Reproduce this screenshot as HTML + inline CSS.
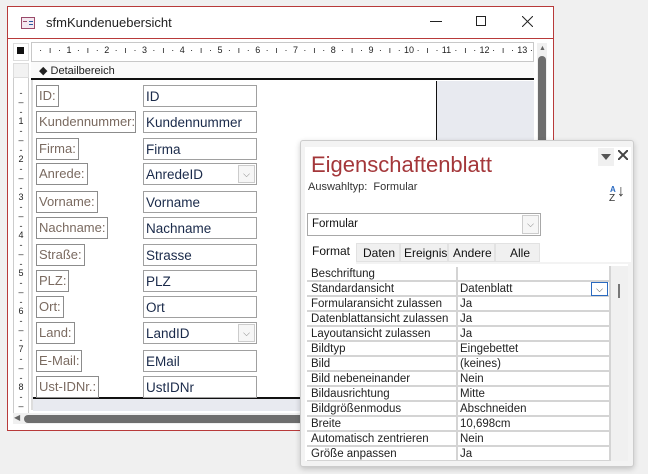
<!DOCTYPE html>
<html><head><meta charset="utf-8"><style>
*{box-sizing:border-box;margin:0;padding:0}
body{width:648px;height:474px;background:#f0f0f0;position:relative;overflow:hidden;font-family:"Liberation Sans",sans-serif}
.a{position:absolute}
.lb{position:absolute;left:36px;height:22px;border:1px solid #8c8c8c;font-size:13px;color:#7a6a60;padding:2px 2px 0 2px;white-space:nowrap;background:#fff}
.tb{position:absolute;left:143px;width:114px;height:22px;border:1px solid #a0a0a0;font-size:13.5px;color:#1a2a4a;padding:3px 0 0 2px;background:#fff}
.dd{position:absolute;right:1px;top:1px;width:17px;height:18px;border:1px solid #ccc;background:#f6f6f6;color:#777;font-size:9px;text-align:center;line-height:16px}
.row{position:absolute;left:307px;width:302px;height:15px;font-size:11.5px;color:#222;border-bottom:2px solid #d4d4d4}
.row span{position:absolute;top:1px}
.row .k{left:4px}.row .v{left:153px}
.row:before{content:"";position:absolute;left:149px;top:0;width:2px;height:15px;background:#d4d4d4}
.hr{position:absolute;top:45px;left:26.5px;white-space:nowrap;font-size:9px;color:#222;height:14px;overflow:hidden;width:506px}
.hr i{display:inline-block;width:9.44px;text-align:center;font-style:normal}
.vr{position:absolute;left:13px;top:79px;width:16px;font-size:9px;color:#222;height:333px;overflow:hidden}
.vr i{display:block;height:9.5px;line-height:9.5px;text-align:center;font-style:normal;margin-top:-4.75px;margin-bottom:4.75px}
</style></head><body>
<div class="a" style="left:7px;top:6px;width:547px;height:425px;background:#fff;border:1px solid #b83a3a"></div>
<div class="a" style="left:8px;top:38px;width:545px;height:1px;background:#b83a3a"></div>
<div class="a" style="left:21px;top:17px;width:14px;height:12px;border:1px solid #9a4a6a;background:#f4e8f0"></div>
<div class="a" style="left:23px;top:21px;width:4px;height:1px;background:#9a4a6a"></div>
<div class="a" style="left:29px;top:21px;width:4px;height:1px;background:#2a5aa0"></div>
<div class="a" style="left:29px;top:24px;width:4px;height:1px;background:#2a5aa0"></div>
<div class="a" style="left:46px;top:15px;font-size:13px;color:#222">sfmKundenuebersicht</div>
<div class="a" style="left:430px;top:21px;width:12px;height:1px;background:#222"></div>
<div class="a" style="left:476px;top:16px;width:10px;height:10px;border:1px solid #222"></div>
<svg class="a" style="left:522px;top:16px" width="11" height="11"><path d="M0 0L11 11M11 0L0 11" stroke="#222" stroke-width="1"/></svg>
<!-- ruler -->
<div class="a" style="left:13px;top:43px;width:16px;height:18px;background:#fff;border:1px solid #ddd"></div>
<div class="a" style="left:17px;top:47px;width:7px;height:7px;background:#111"></div>
<div class="a" style="left:31px;top:42px;width:503px;height:20px;border:1px solid #c8c8c8;background:#fff"></div>
<div class="hr"><i></i><i>·</i><i>ı</i><i>·</i><i>1</i><i>·</i><i>ı</i><i>·</i><i>2</i><i>·</i><i>ı</i><i>·</i><i>3</i><i>·</i><i>ı</i><i>·</i><i>4</i><i>·</i><i>ı</i><i>·</i><i>5</i><i>·</i><i>ı</i><i>·</i><i>6</i><i>·</i><i>ı</i><i>·</i><i>7</i><i>·</i><i>ı</i><i>·</i><i>8</i><i>·</i><i>ı</i><i>·</i><i>9</i><i>·</i><i>ı</i><i>·</i><i>10</i><i>·</i><i>ı</i><i>·</i><i>11</i><i>·</i><i>ı</i><i>·</i><i>12</i><i>·</i><i>ı</i><i>·</i><i>13</i><i>·</i></div>
<div class="a" style="left:13px;top:63px;width:16px;height:350px;background:#fff;border-right:1px solid #ccc;border-left:1px solid #ccc"></div>
<div class="a" style="left:13px;top:63px;width:16px;height:15px;background:#f2f2f2;border:1px solid #ddd"></div>
<div class="vr" style="top:84px;height:328px"><i></i><i>-</i><i>–</i><i>-</i><i>1</i><i>-</i><i>–</i><i>-</i><i>2</i><i>-</i><i>–</i><i>-</i><i>3</i><i>-</i><i>–</i><i>-</i><i>4</i><i>-</i><i>–</i><i>-</i><i>5</i><i>-</i><i>–</i><i>-</i><i>6</i><i>-</i><i>–</i><i>-</i><i>7</i><i>-</i><i>–</i><i>-</i><i>8</i><i>-</i><i>–</i><i>-</i></div>
<!-- detail header -->
<div class="a" style="left:31px;top:62px;width:503px;height:18px;background:#fafafa;border-bottom:2px solid #111"></div>
<div class="a" style="left:39px;top:64px;font-size:11px;color:#222">◆ Detailbereich</div>
<div class="a" style="left:31px;top:80px;width:2px;height:330px;background:#ddd"></div>
<div class="a" style="left:436px;top:81px;width:98px;height:318px;background:#e8eaf0;border-left:1px solid #111"></div>
<div class="a" style="left:33px;top:397px;width:501px;height:2px;background:#111"></div>
<div class="a" style="left:33px;top:399px;width:501px;height:12px;background:#e8eaf0"></div>
<!-- scrollbars -->
<div class="a" style="left:537px;top:43px;width:10px;height:370px;background:#f0f0f0"></div>
<div class="a" style="left:539px;top:45px;font-size:7px;color:#666">▲</div>
<div class="a" style="left:538px;top:56px;width:8px;height:360px;background:#6e6e6e;border-radius:4px"></div>
<div class="a" style="left:13px;top:413px;width:520px;height:11px;background:#f0f0f0"></div>
<div class="a" style="left:14px;top:413px;font-size:8px;color:#666">◀</div>
<div class="a" style="left:24px;top:415px;width:280px;height:8px;background:#6e6e6e;border-radius:4px"></div>
<!-- form -->
<div class="lb" style="top:85px">ID:</div><div class="tb" style="top:85px">ID</div>
<div class="lb" style="top:111px;padding-right:0">Kundennummer:</div><div class="tb" style="top:111px">Kundennummer</div>
<div class="lb" style="top:138px">Firma:</div><div class="tb" style="top:138px">Firma</div>
<div class="lb" style="top:163px">Anrede:</div><div class="tb" style="top:163px">AnredeID<div class="dd">⌵</div></div>
<div class="lb" style="top:191px">Vorname:</div><div class="tb" style="top:191px">Vorname</div>
<div class="lb" style="top:217px">Nachname:</div><div class="tb" style="top:217px">Nachname</div>
<div class="lb" style="top:244px">Straße:</div><div class="tb" style="top:244px">Strasse</div>
<div class="lb" style="top:270px">PLZ:</div><div class="tb" style="top:270px">PLZ</div>
<div class="lb" style="top:296px">Ort:</div><div class="tb" style="top:296px">Ort</div>
<div class="lb" style="top:322px">Land:</div><div class="tb" style="top:322px">LandID<div class="dd">⌵</div></div>
<div class="lb" style="top:350px">E-Mail:</div><div class="tb" style="top:350px">EMail</div>
<div class="lb" style="top:376px">Ust-IDNr.:</div><div class="tb" style="top:376px">UstIDNr</div>
<!-- property sheet -->
<div class="a" style="left:300px;top:140px;width:334px;height:327px;background:#f3f3f3;border:1px solid #ccc;border-radius:3px;box-shadow:0 2px 6px rgba(0,0,0,.2)"></div>
<div class="a" style="left:305px;top:147px;width:326px;height:115px;background:#fff"></div>
<div class="a" style="left:598px;top:148px;width:16px;height:18px;background:#f0f0f0"></div>
<svg class="a" style="left:601px;top:154px" width="10" height="6"><path d="M0 0H10L5 6Z" fill="#555"/></svg>
<svg class="a" style="left:618px;top:150px" width="10" height="10"><path d="M0 0L10 10M10 0L0 10" stroke="#444" stroke-width="2"/></svg>
<div class="a" style="left:311px;top:152px;font-size:22px;color:#a4373a">Eigenschaftenblatt</div>
<div class="a" style="left:308px;top:181px;font-size:11px;color:#333">Auswahltyp:&nbsp; Formular</div>
<div class="a" style="left:610px;top:186px;font-size:8px;color:#2a6ac0;line-height:8px;font-weight:bold">A</div>
<div class="a" style="left:609px;top:194px;font-size:10px;color:#333;line-height:9px">Z</div>
<div class="a" style="left:617px;top:183px;font-size:16px;color:#333">↓</div>
<div class="a" style="left:307px;top:213px;width:234px;height:23px;border:1px solid #a8a8a8;background:#fff;font-size:11.5px;color:#111;padding:4px 0 0 4px">Formular<div class="dd" style="width:17px;height:19px;top:1px">⌵</div></div>
<div class="a" style="left:305px;top:240px;width:51px;height:24px;background:#fff;font-size:12px;color:#111;padding:4px 0 0 7px">Format</div>
<div class="a" style="left:356px;top:243px;width:44px;height:19px;background:#f0f0f0;border:1px solid #e2e2e2;font-size:12px;padding:2px 0 0 6px;color:#111">Daten</div>
<div class="a" style="left:400px;top:243px;width:48px;height:19px;background:#f0f0f0;border:1px solid #e2e2e2;font-size:12px;padding:2px 0 0 3px;color:#111">Ereignis</div>
<div class="a" style="left:448px;top:243px;width:47px;height:19px;background:#f0f0f0;border:1px solid #e2e2e2;font-size:12px;padding:2px 0 0 4px;color:#111">Andere</div>
<div class="a" style="left:495px;top:243px;width:45px;height:19px;background:#f0f0f0;border:1px solid #e2e2e2;font-size:12px;padding:2px 0 0 14px;color:#111">Alle</div>
<div class="a" style="left:305px;top:264px;width:323px;height:197px;background:#fff"></div>
<div class="a" style="left:609px;top:266px;width:19px;height:195px;background:#f0f0f0;border-left:2px solid #d4d4d4"></div>
<div class="a" style="left:618px;top:284px;width:2px;height:14px;background:#777"></div>
<div class="a" style="left:305px;top:266px;width:304px;height:195px;overflow:hidden">
<div class="row" style="left:2px;top:1px"><span class="k">Beschriftung</span></div>
<div class="row" style="left:2px;top:16px;"><span class="k">Standardansicht</span><span class="v">Datenblatt</span><div class="a" style="left:284px;top:0;width:17px;height:14px;border:1px solid #2a6ac0;font-size:9px;color:#333;text-align:center;line-height:12px">⌵</div></div>
<div class="row" style="left:2px;top:31px"><span class="k">Formularansicht zulassen</span><span class="v">Ja</span></div>
<div class="row" style="left:2px;top:46px"><span class="k">Datenblattansicht zulassen</span><span class="v">Ja</span></div>
<div class="row" style="left:2px;top:61px"><span class="k">Layoutansicht zulassen</span><span class="v">Ja</span></div>
<div class="row" style="left:2px;top:76px"><span class="k">Bildtyp</span><span class="v">Eingebettet</span></div>
<div class="row" style="left:2px;top:91px"><span class="k">Bild</span><span class="v">(keines)</span></div>
<div class="row" style="left:2px;top:106px"><span class="k">Bild nebeneinander</span><span class="v">Nein</span></div>
<div class="row" style="left:2px;top:121px"><span class="k">Bildausrichtung</span><span class="v">Mitte</span></div>
<div class="row" style="left:2px;top:136px"><span class="k">Bildgrößenmodus</span><span class="v">Abschneiden</span></div>
<div class="row" style="left:2px;top:151px"><span class="k">Breite</span><span class="v">10,698cm</span></div>
<div class="row" style="left:2px;top:166px"><span class="k">Automatisch zentrieren</span><span class="v">Nein</span></div>
<div class="row" style="left:2px;top:181px"><span class="k">Größe anpassen</span><span class="v">Ja</span></div>
</div>
</body></html>
